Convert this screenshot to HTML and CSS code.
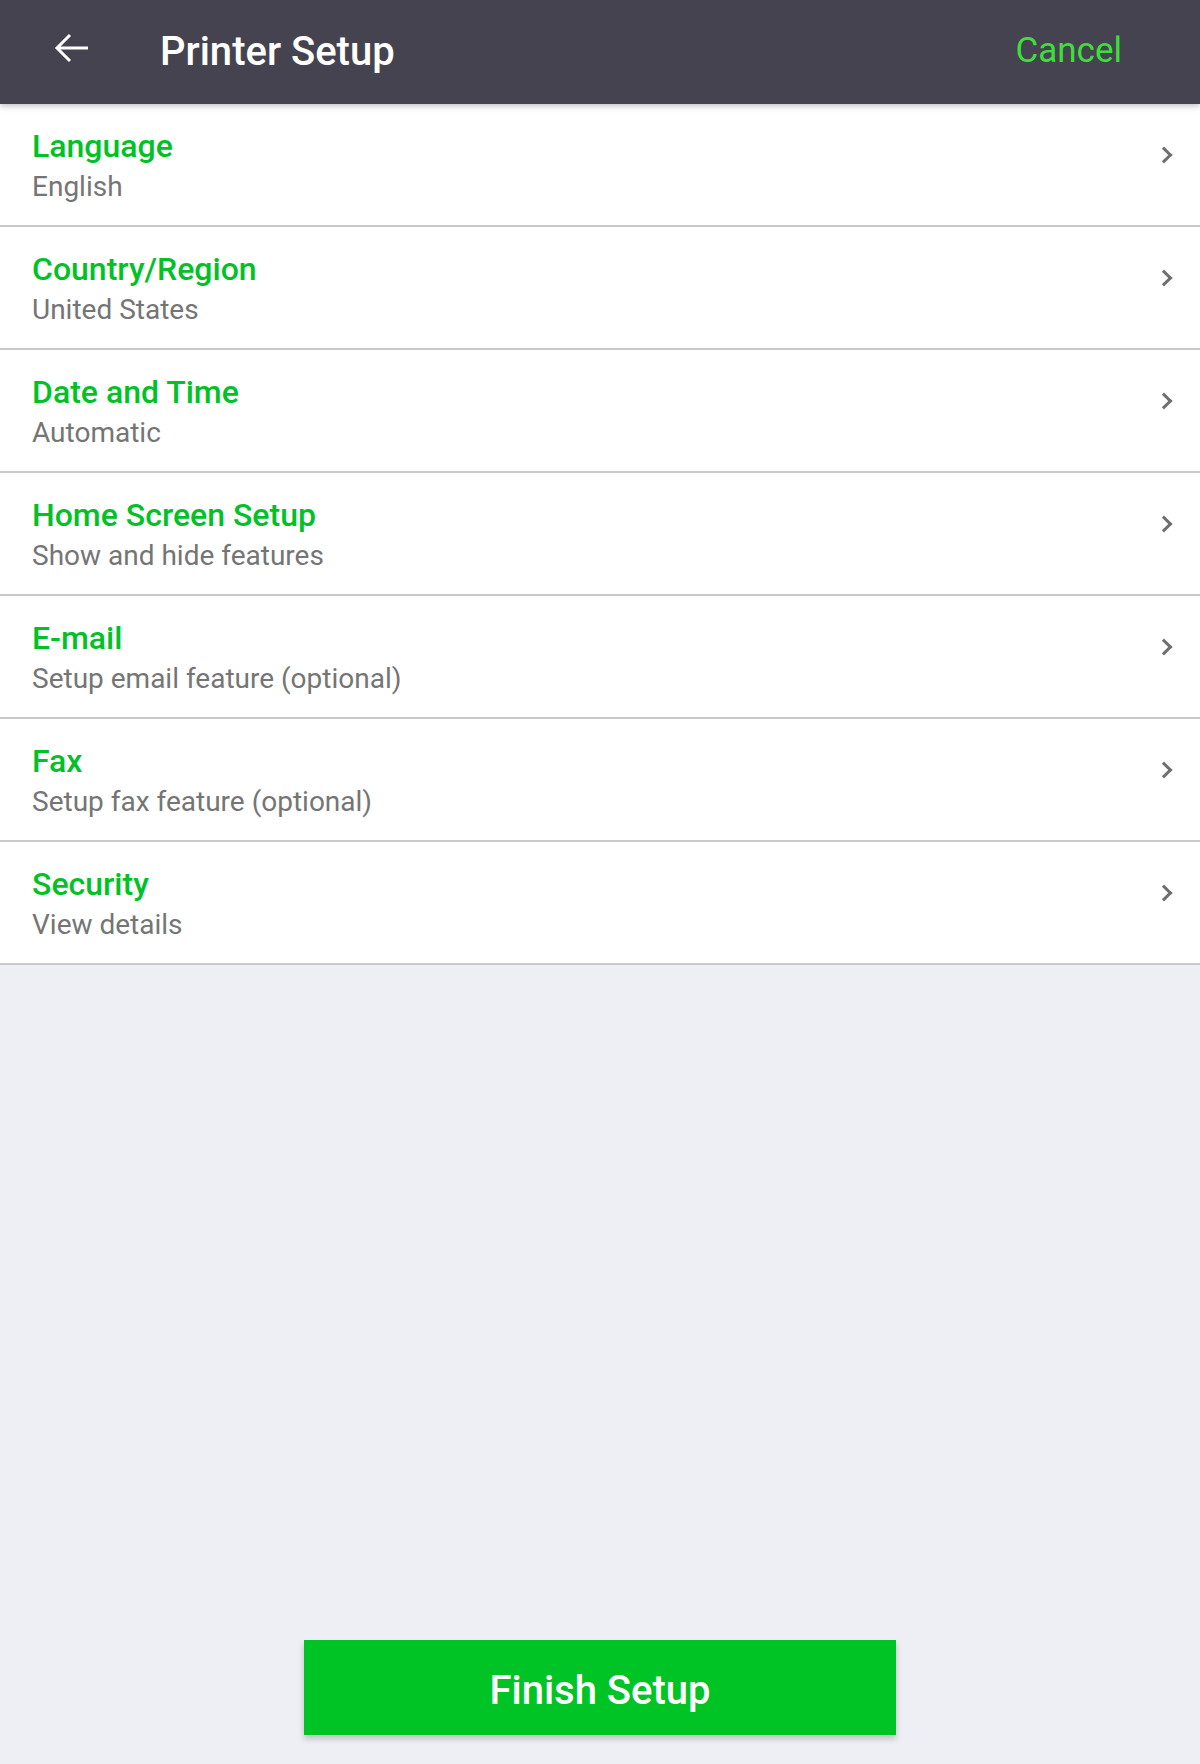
FILE: index.html
```html
<!DOCTYPE html>
<html lang="en">
<head>
  <meta charset="UTF-8" />
  <meta name="viewport" content="width=device-width,initial-scale=1" />
  <title>Printer Setup</title>
  <link rel="stylesheet" href="styles.css">
</head>
<body>
  <header class="topbar">
    <button class="back-btn" aria-label="Back">
      <svg width="36" height="30" viewBox="0 0 36 30">
        <path d="M34 15H3M16 2L3 15l13 13" fill="none" stroke="#fff" stroke-width="3"/>
      </svg>
    </button>
    <h1 class="title">Printer Setup</h1>
    <button class="cancel-btn">Cancel</button>
  </header>

  <ul class="menu">
    <li class="item">
      <div class="item-text">
        <div class="item-title">Language</div>
        <div class="item-sub">English</div>
      </div>
      <span class="chev"></span>
    </li>
    <li class="item">
      <div class="item-text">
        <div class="item-title">Country/Region</div>
        <div class="item-sub">United States</div>
      </div>
      <span class="chev"></span>
    </li>
    <li class="item">
      <div class="item-text">
        <div class="item-title">Date and Time</div>
        <div class="item-sub">Automatic</div>
      </div>
      <span class="chev"></span>
    </li>
    <li class="item">
      <div class="item-text">
        <div class="item-title">Home Screen Setup</div>
        <div class="item-sub">Show and hide features</div>
      </div>
      <span class="chev"></span>
    </li>
    <li class="item">
      <div class="item-text">
        <div class="item-title">E-mail</div>
        <div class="item-sub">Setup email feature (optional)</div>
      </div>
      <span class="chev"></span>
    </li>
    <li class="item">
      <div class="item-text">
        <div class="item-title">Fax</div>
        <div class="item-sub">Setup fax feature (optional)</div>
      </div>
      <span class="chev"></span>
    </li>
    <li class="item">
      <div class="item-text">
        <div class="item-title">Security</div>
        <div class="item-sub">View details</div>
      </div>
      <span class="chev"></span>
    </li>
  </ul>

  <div class="footer">
    <button class="finish-btn">Finish Setup</button>
  </div>
</body>
</html>
```

FILE: styles.css
```css
html, body {
  height: 100%;
}
body {
  margin: 0;
  font-family: Roboto, "Noto Sans", sans-serif;
  background: #eeeff4;
  display: flex;
  flex-direction: column;
}
button {
  font-family: inherit;
  border: none;
  background: none;
  cursor: pointer;
  padding: 0;
}
.topbar {
  height: 104px;
  flex: none;
  background: #45434f;
  display: flex;
  align-items: center;
  box-shadow: 0 2px 6px rgba(0, 0, 0, 0.25);
  position: relative;
  z-index: 1;
}
.back-btn {
  width: 36px;
  height: 30px;
  margin-left: 54px;
  margin-top: -8px;
}
.back-btn svg {
  display: block;
}
.title {
  margin: -2px 0 0 70px;
  font-size: 40px;
  font-weight: 500;
  color: #fff;
  flex: 1;
}
.cancel-btn {
  font-size: 35px;
  color: #3ddf3a;
  margin-right: 78px;
  margin-top: -4px;
}
.menu {
  list-style: none;
  margin: 0;
  padding: 0;
  background: #fff;
}
.item {
  height: 121px;
  border-bottom: 2px solid #c8c8cd;
  display: flex;
  align-items: center;
  padding: 0 30px 0 32px;
}
.item-text {
  flex: 1;
  margin-top: 5px;
}
.item-title {
  font-size: 32px;
  font-weight: 500;
  color: #00c226;
  line-height: 40px;
}
.item-sub {
  font-size: 28px;
  color: #757575;
  line-height: 42px;
}
.chev {
  width: 9px;
  height: 9px;
  border-top: 3px solid #6f6f6f;
  border-right: 3px solid #6f6f6f;
  transform: rotate(45deg);
  margin-top: -20px;
}
.footer {
  flex: 1;
  display: flex;
  align-items: flex-end;
  justify-content: center;
  padding-bottom: 29px;
}
.finish-btn {
  width: 592px;
  height: 95px;
  padding-top: 5px;
  background: #00c425;
  color: #fff;
  font-size: 40px;
  font-weight: 500;
  box-shadow: 0 4px 6px rgba(0, 0, 0, 0.2);
}
```
